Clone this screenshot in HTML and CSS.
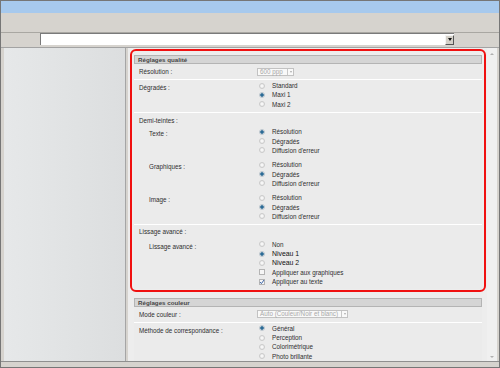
FILE: index.html
```html
<!DOCTYPE html>
<html lang="fr">
<head>
  <meta charset="UTF-8" />
  <title>Réglages qualité</title>
  <link rel="stylesheet" href="styles.css">
</head>
<body>
  <div class="window">
    <div class="titlebar"></div>
    <div class="menubar"></div>
    <div class="toolbar">
      <div class="tool-left"></div>
      <div class="address"><span class="combo-btn"></span></div>
    </div>

    <div class="main">
      <div class="side"></div>

      <div class="content">
        <div class="section">
          <div class="section-title">Réglages qualité</div>

          <div class="row row-inline">
            <div class="label">Résolution :</div>
            <div class="control"><span class="select sel-res">600 ppp<span class="sel-arrow"></span></span></div>
          </div>

          <div class="row row-list">
            <div class="label">Dégradés :</div>
            <div class="control">
              <div class="opt"><span class="radio"></span>Standard</div>
              <div class="opt"><span class="radio on"></span>Maxi 1</div>
              <div class="opt"><span class="radio"></span>Maxi 2</div>
            </div>
          </div>

          <div class="row group group-demi">
            <div class="group-head">Demi-teintes :</div>
            <div class="sub sub-first">
              <div class="label sub-label">Texte :</div>
              <div class="control">
                <div class="opt"><span class="radio on"></span>Résolution</div>
                <div class="opt"><span class="radio"></span>Dégradés</div>
                <div class="opt"><span class="radio"></span>Diffusion d'erreur</div>
              </div>
            </div>
            <div class="sub">
              <div class="label sub-label">Graphiques :</div>
              <div class="control">
                <div class="opt"><span class="radio"></span>Résolution</div>
                <div class="opt"><span class="radio on"></span>Dégradés</div>
                <div class="opt"><span class="radio"></span>Diffusion d'erreur</div>
              </div>
            </div>
            <div class="sub">
              <div class="label sub-label">Image :</div>
              <div class="control">
                <div class="opt"><span class="radio"></span>Résolution</div>
                <div class="opt"><span class="radio on"></span>Dégradés</div>
                <div class="opt"><span class="radio"></span>Diffusion d'erreur</div>
              </div>
            </div>
          </div>

          <div class="row group group-liss">
            <div class="group-head">Lissage avancé :</div>
            <div class="sub sub-liss">
              <div class="label sub-label">Lissage avancé :</div>
              <div class="control">
                <div class="opt"><span class="radio"></span>Non</div>
                <div class="opt strong"><span class="radio on"></span>Niveau 1</div>
                <div class="opt strong"><span class="radio"></span>Niveau 2</div>
                <div class="opt"><span class="check"></span>Appliquer aux graphiques</div>
                <div class="opt"><span class="check on"><svg width="6" height="6" viewBox="0 0 6 6"><polyline points="1,3 2.4,4.6 5,1" fill="none" stroke="#3b64a6" stroke-width="1"/></svg></span>Appliquer au texte</div>
              </div>
            </div>
          </div>
        </div>

        <div class="section section-second">
          <div class="section-title">Réglages couleur</div>

          <div class="row row-inline">
            <div class="label">Mode couleur :</div>
            <div class="control"><span class="select sel-mode">Auto (Couleur/Noir et blanc)<span class="sel-arrow"></span></span></div>
          </div>

          <div class="row row-list">
            <div class="label">Méthode de correspondance :</div>
            <div class="control">
              <div class="opt"><span class="radio on"></span>Général</div>
              <div class="opt"><span class="radio"></span>Perception</div>
              <div class="opt"><span class="radio"></span>Colorimétrique</div>
              <div class="opt"><span class="radio"></span>Photo brillante</div>
            </div>
          </div>
        </div>

        <div class="highlight"></div>
      </div>

      <div class="scrollbar">
        <span class="scroll-up"></span>
        <span class="scroll-down"></span>
      </div>
    </div>
  </div>
</body>
</html>
```

FILE: styles.css
```css
body {
  margin: 0;
  font-family: "Liberation Sans", Arial, sans-serif;
  background: #d6d3ce;
}
.window {
  width: 500px;
  height: 368px;
  box-sizing: border-box;
  border: 1px solid #767676;
  background: #d6d3ce;
  display: flex;
  flex-direction: column;
  overflow: hidden;
}
.titlebar {
  height: 12px;
  flex: none;
  background: #a7c9ed;
}
.menubar {
  height: 19px;
  flex: none;
}
.toolbar {
  height: 15px;
  flex: none;
  box-sizing: border-box;
  border-top: 1px solid #a9a7a2;
  display: flex;
}
.tool-left {
  width: 39px;
}
.address {
  width: 414px;
  height: 12px;
  box-sizing: border-box;
  background: #fff;
  border-top: 1px solid #7a7a7a;
  border-left: 1px solid #7a7a7a;
  display: flex;
  justify-content: flex-end;
  align-items: center;
}
.combo-btn {
  width: 9px;
  height: 10px;
  box-sizing: border-box;
  background: #d4d0c8;
  border: 1px solid;
  border-color: #f4f4f4 #555 #555 #f4f4f4;
  display: flex;
  align-items: center;
  justify-content: center;
}
.combo-btn::after {
  content: "";
  border-left: 2.5px solid transparent;
  border-right: 2.5px solid transparent;
  border-top: 3px solid #111;
}
.main {
  flex: 1;
  min-height: 0;
  display: flex;
  margin-bottom: 5px;
  padding: 0 2px 0 3px;
  border-top: 1px solid #a3a3a3;
  border-bottom: 1px solid #8f8f8f;
}
.side {
  width: 122px;
  flex: none;
  box-sizing: border-box;
  border-right: 1px solid #a5a5a5;
  background: linear-gradient(to right, #e6e8e9, #dcdedf);
}
.content {
  width: 359px;
  flex: none;
  margin-left: 2px;
  box-sizing: border-box;
  padding: 7px 5px 0 6px;
  background: #ededed;
  position: relative;
  overflow: hidden;
  font-size: 6.3px;
  color: #2e2e2e;
}
.section {
  background: #ebebeb;
}
.section-second {
  margin-top: 9px;
}
.section-title {
  height: 9px;
  box-sizing: border-box;
  border: 1px solid #b4b4b4;
  background: #d5d5d5;
  padding-left: 3px;
  font-weight: bold;
  font-size: 6.2px;
  line-height: 7px;
  color: #454545;
}
.row {
  border-bottom: 1px solid #fff;
}
.row-inline {
  height: 16px;
  box-sizing: border-box;
  display: flex;
  align-items: center;
}
.row-list {
  display: flex;
  padding: 1px 0 3px;
}
.label {
  width: 123px;
  flex: none;
  box-sizing: border-box;
  padding-left: 5px;
  line-height: 9.3px;
}
.row-list .label,
.sub-label {
  padding-top: 2px;
}
.sub-label {
  padding-left: 15px;
}
.control {
  padding-left: 2px;
}
.opt {
  height: 9.3px;
  display: flex;
  align-items: center;
  white-space: nowrap;
}
.opt.strong {
  font-size: 6.9px;
  color: #111;
}
.radio {
  width: 6px;
  height: 6px;
  box-sizing: border-box;
  margin-right: 7px;
  border-radius: 50%;
  border: 1px solid #cacaca;
  background: radial-gradient(circle, #fdfdfd, #e4e4e4);
}
.radio.on {
  border-color: #b9c4cc;
  background: radial-gradient(circle, #2c6b96 0 1.5px, #d9e2e8 2px);
}
.check {
  width: 6px;
  height: 6px;
  box-sizing: border-box;
  margin-right: 7px;
  border: 1px solid #b4b4b4;
  background: #f6f6f6;
  position: relative;
}
.check svg {
  position: absolute;
  left: -1px;
  top: -1px;
}
.group {
  display: block;
}
.group-demi {
  padding: 3px 0 2.7px;
}
.group-liss {
  padding: 2px 0 2.5px;
  border-bottom: none;
}
.group-head {
  padding-left: 5px;
  line-height: 9.3px;
}
.sub {
  display: flex;
  margin-top: 5.1px;
}
.sub-first {
  margin-top: 2px;
}
.sub-liss {
  margin-top: 3.7px;
}
.select {
  height: 8px;
  box-sizing: border-box;
  border: 1px solid #c2c2c2;
  background: #f9f9f9;
  color: #a8a8a8;
  display: flex;
  align-items: center;
  justify-content: space-between;
  padding-left: 2px;
  line-height: 6px;
  white-space: nowrap;
  margin-left: -2px;
}
.sel-res {
  width: 37px;
}
.sel-mode {
  width: 91px;
}
.sel-arrow {
  width: 6px;
  height: 6px;
  box-sizing: border-box;
  border-left: 1px solid #c8c8c8;
  display: flex;
  align-items: center;
  justify-content: center;
}
.sel-arrow::after {
  content: "";
  border-left: 1.5px solid transparent;
  border-right: 1.5px solid transparent;
  border-top: 2px solid #aaa;
}
.highlight {
  position: absolute;
  left: 2px;
  top: 1px;
  width: 356px;
  height: 243px;
  box-sizing: border-box;
  border: 2px solid #f01010;
  border-radius: 6px;
}
.scrollbar {
  width: 10px;
  flex: none;
  background: #f0f0f0;
  display: flex;
  flex-direction: column;
  justify-content: space-between;
  align-items: center;
  padding: 5px 0 3px;
  box-sizing: border-box;
}
.scroll-up {
  border-left: 2px solid transparent;
  border-right: 2px solid transparent;
  border-bottom: 2px solid #b0b0b0;
}
.scroll-down {
  border-left: 2px solid transparent;
  border-right: 2px solid transparent;
  border-top: 2px solid #b0b0b0;
}
```
